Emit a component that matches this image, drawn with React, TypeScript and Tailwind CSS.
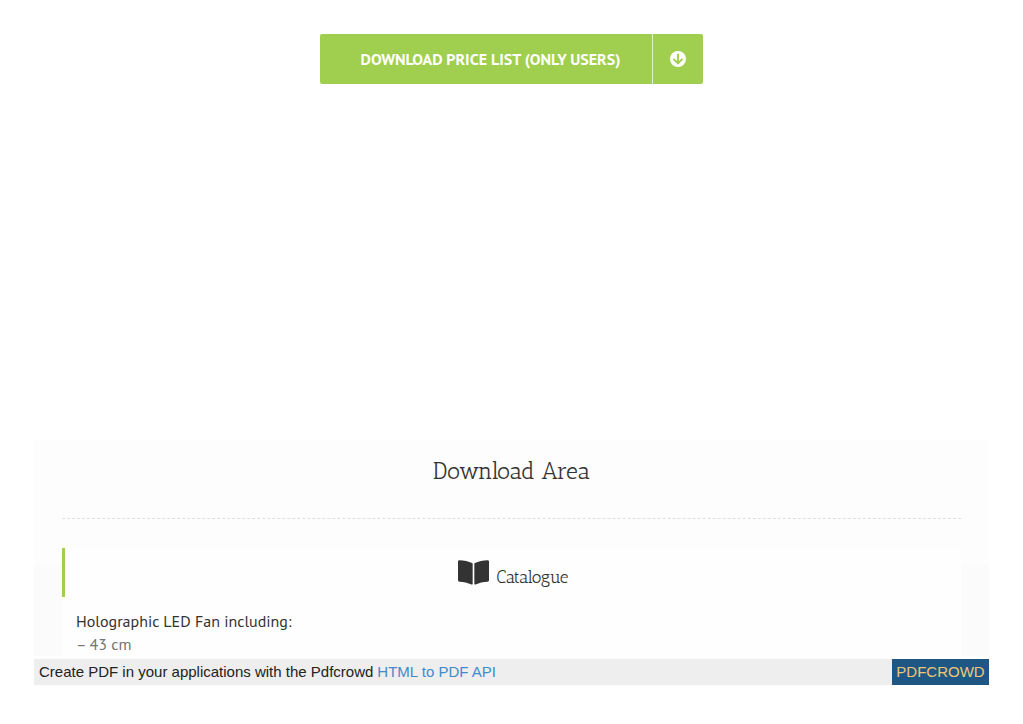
import React from "react";

const lines = ["– 43 cm"];

function ArrowCircleIcon() {
  return (
    <svg viewBox="0 0 16 16" className="w-4 h-4" aria-hidden="true">
      <circle cx="8" cy="8" r="8" fill="#fff" />
      <path
        d="M8 2.800v9.200M3.500 7.800 8 12.300l4.500-4.500"
        fill="none"
        stroke="#a0ce4e"
        strokeWidth="1.900"
      />
    </svg>
  );
}

function BookIcon() {
  return (
    <svg
      viewBox="0 0 31.500 25"
      className="w-[31px] h-[25px] fill-[#333333]"
      aria-hidden="true"
    >
      <path d="M1.400 0C5.800.2 11 1.100 14.300 2.900c.4.2.6.5.6.9v20.100c0 .7-.7 1.100-1.300.8C10.300 22.900 5.500 22 1.500 21.800.7 21.800 0 21.200 0 20.400V1.400C0 .6.6 0 1.400 0Z" />
      <path d="M30.100 0C25.700.2 20.500 1.100 17.200 2.900c-.4.2-.6.5-.6.9v20.100c0 .7.7 1.100 1.300.8 3.300-1.800 8.100-2.700 12.100-2.900.8 0 1.500-.6 1.500-1.400V1.400C31.500.6 30.900 0 30.100 0Z" />
    </svg>
  );
}

function PriceListButton() {
  return (
    <button
      type="button"
      className="flex h-[50px] items-stretch rounded-xs bg-[#a0ce4e] text-white"
    >
      <span className="flex w-[332px] items-center justify-center pl-[9px] text-base font-bold whitespace-nowrap font-['PT_Sans','Lato',sans-serif]">
        DOWNLOAD PRICE LIST (ONLY USERS)
      </span>
      <span className="flex w-[51px] items-center justify-center border-l border-[#e3f0ca]">
        <ArrowCircleIcon />
      </span>
    </button>
  );
}

function DownloadArea() {
  return (
    <section className="bg-linear-to-b from-[#fdfdfd] from-[125px] to-[#fbfbfb] to-[125px] px-7">
      <h2 className="pt-3 text-center text-[23px] leading-[38px] text-[#333333] font-['Antic_Slab','DejaVu_Serif_Condensed','DejaVu_Serif',serif]">
        Download Area
      </h2>
      <div className="mt-7 border-t border-dashed border-[#e0dede]"></div>
      <div className="mt-[29px] bg-[#fefefe]">
        <div className="flex h-[49px] items-center justify-center gap-2 border-l-3 border-[#a0ce4e]">
          <BookIcon />
          <h3 className="pt-2 text-[17px] leading-6 text-[#333333] font-['Antic_Slab','DejaVu_Serif_Condensed','DejaVu_Serif',serif]">
            Catalogue
          </h3>
        </div>
        <div className="px-3.5 pt-[13px] text-base leading-[23px] font-['PT_Sans','Noto_Sans',sans-serif]">
          <p className="text-[#333333]">Holographic LED Fan including:</p>
          {lines.map((line) => (
            <p key={line} className="text-[#747474]">
              {line}
            </p>
          ))}
        </div>
      </div>
    </section>
  );
}

export default function App() {
  return (
    <main className="bg-white px-[34px] pt-[34px]">
      <div className="flex justify-center">
        <PriceListButton />
      </div>
      <div className="mt-[356px]">
        <DownloadArea />
      </div>
      <footer className="mt-[3px] flex h-[26px] items-stretch justify-between bg-[#eeeeee] text-[15px] font-['Liberation_Sans',Arial,sans-serif]">
        <p className="flex items-center gap-1 pl-[5px] text-[#222222]">
          Create PDF in your applications with the Pdfcrowd
          <a href="#api" className="text-[#428bca]">
            HTML to PDF API
          </a>
        </p>
        <a
          href="#pdfcrowd"
          className="flex w-[97px] items-center justify-center bg-[#1f5784] text-[#f0c674]"
        >
          PDFCROWD
        </a>
      </footer>
    </main>
  );
}
